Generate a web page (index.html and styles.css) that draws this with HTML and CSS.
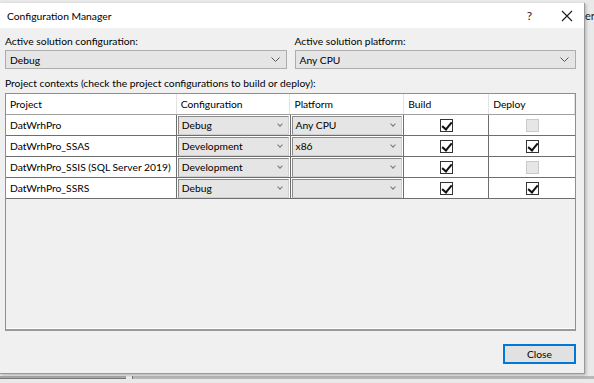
FILE: index.html
```html
<!DOCTYPE html>
<html lang="en">
<head>
    <meta charset="UTF-8">
    <title>Configuration Manager</title>
    <link rel="stylesheet" href="styles.css">
</head>
<body>
    <div class="behind-text">er</div>
    <div class="dialog">
        <div class="titlebar">
            <span class="title">Configuration Manager</span>
            <span class="help">?</span>
            <svg class="close-x" width="12" height="12" viewBox="0 0 12 12"><path d="M1 1 L11 11 M11 1 L1 11" stroke="#1a1a1a" stroke-width="1.1" fill="none"/></svg>
        </div>

        <div class="content">
            <div class="solution-row">
                <div class="field">
                    <label class="label">Active solution configuration:</label>
                    <div class="combo">
                        <span>Debug</span>
                        <svg width="9" height="5" viewBox="0 0 9 5"><path d="M0.5 0.5 L4.5 4.5 L8.5 0.5" stroke="#555" fill="none"/></svg>
                    </div>
                </div>
                <div class="field">
                    <label class="label">Active solution platform:</label>
                    <div class="combo">
                        <span>Any CPU</span>
                        <svg width="9" height="5" viewBox="0 0 9 5"><path d="M0.5 0.5 L4.5 4.5 L8.5 0.5" stroke="#555" fill="none"/></svg>
                    </div>
                </div>
            </div>

            <div class="label contexts-label">Project contexts (check the project configurations to build or deploy):</div>

            <div class="grid">
                <div class="grid-row header">
                    <div class="cell c-project">Project</div>
                    <div class="cell c-config">Configuration</div>
                    <div class="cell c-platform">Platform</div>
                    <div class="cell c-build">Build</div>
                    <div class="cell c-deploy">Deploy</div>
                </div>

                <div class="grid-row">
                    <div class="cell c-project">DatWrhPro</div>
                    <div class="cell c-config"><div class="cell-combo"><span>Debug</span><i class="chev"></i></div></div>
                    <div class="cell c-platform"><div class="cell-combo"><span>Any CPU</span><i class="chev"></i></div></div>
                    <div class="cell c-build"><span class="check on"></span></div>
                    <div class="cell c-deploy"><span class="check disabled"></span></div>
                </div>

                <div class="grid-row">
                    <div class="cell c-project">DatWrhPro_SSAS</div>
                    <div class="cell c-config"><div class="cell-combo"><span>Development</span><i class="chev"></i></div></div>
                    <div class="cell c-platform"><div class="cell-combo"><span>x86</span><i class="chev"></i></div></div>
                    <div class="cell c-build"><span class="check on"></span></div>
                    <div class="cell c-deploy"><span class="check on"></span></div>
                </div>

                <div class="grid-row">
                    <div class="cell c-project">DatWrhPro_SSIS (SQL Server 2019)</div>
                    <div class="cell c-config"><div class="cell-combo"><span>Development</span><i class="chev"></i></div></div>
                    <div class="cell c-platform"><div class="cell-combo"><span></span><i class="chev"></i></div></div>
                    <div class="cell c-build"><span class="check on"></span></div>
                    <div class="cell c-deploy"><span class="check disabled"></span></div>
                </div>

                <div class="grid-row">
                    <div class="cell c-project">DatWrhPro_SSRS</div>
                    <div class="cell c-config"><div class="cell-combo"><span>Debug</span><i class="chev"></i></div></div>
                    <div class="cell c-platform"><div class="cell-combo"><span></span><i class="chev"></i></div></div>
                    <div class="cell c-build"><span class="check on"></span></div>
                    <div class="cell c-deploy"><span class="check on"></span></div>
                </div>
            </div>

            <div class="buttons">
                <button class="btn default">Close</button>
            </div>
        </div>
    </div>
    <div class="taskstrip">
        <div class="strip-a"></div>
        <div class="strip-b"></div>
    </div>
</body>
</html>
```

FILE: styles.css
```css
* {
    margin: 0;
    padding: 0;
    box-sizing: border-box;
}

body {
    width: 594px;
    height: 383px;
    overflow: hidden;
    background: #e9e9e9;
    font-family: 'Lato', 'Noto Sans', sans-serif;
    font-size: 10.3px;
    color: #000;
    padding-top: 3px;
    position: relative;
}

.behind-text {
    position: absolute;
    left: 585px;
    top: 9px;
    font-size: 11px;
    color: #222;
}

.dialog {
    position: relative;
    width: 585px;
    height: 371px;
    background: #f0f0f0;
    border-right: 1px solid #9a9a9a;
    border-bottom: 1px solid #9a9a9a;
    box-shadow: 1px 1px 3px rgba(0, 0, 0, 0.25);
}

.titlebar {
    height: 25px;
    background: #fff;
    display: flex;
    align-items: center;
    padding-left: 7px;
}

.title {
    flex: 1;
}

.help {
    font-size: 12px;
    color: #222;
    margin-right: 29px;
}

.close-x {
    margin-right: 11px;
}

.content {
    padding: 4px 8px 0 5px;
}

.solution-row {
    display: flex;
    gap: 8px;
}

.field {
    flex: 1;
}

.label {
    display: block;
    height: 18px;
    line-height: 18px;
}

.combo {
    height: 19px;
    background: #e5e5e5;
    border: 1px solid #adadad;
    display: flex;
    align-items: center;
    justify-content: space-between;
    padding: 0 6px 0 4px;
}

.contexts-label {
    margin-top: 7px;
    height: 17px;
    line-height: 14px;
}

.grid {
    height: 238px;
    border: 1px solid #8f8f8f;
    border-bottom: 2px solid #9a9a9a;
    background: #f0f0f0;
    box-shadow: inset 0 -1px 0 #fff;
}

.grid-row {
    display: flex;
    height: 21px;
    background: #fff;
    border-bottom: 1px solid #6e6e6e;
}

.grid-row.header {
    border-bottom: 1px solid #a0a0a0;
}

.grid-row.header .cell {
    border-right: 1px solid #e3e3e3;
}

.cell {
    display: flex;
    align-items: center;
    padding-left: 4px;
    border-right: 1px solid #6e6e6e;
    white-space: nowrap;
    overflow: hidden;
}

.c-project { width: 171px; }
.c-config { width: 114px; padding: 1px; }
.c-platform { width: 114px; padding: 1px; }
.c-build { width: 85px; justify-content: center; padding-left: 0; }
.c-deploy { width: 86px; justify-content: center; padding-left: 0; border-right: none; }

.header .c-config,
.header .c-platform {
    padding-left: 4px;
}

.header .c-build,
.header .c-deploy {
    justify-content: flex-start;
    padding-left: 4px;
}

.cell-combo {
    flex: 1;
    height: 19px;
    background: #e5e5e5;
    border: 1px solid #8a8a8a;
    border-right-color: #d0d0d0;
    border-bottom-color: #d0d0d0;
    display: flex;
    align-items: center;
    justify-content: space-between;
    padding: 0 6px 0 3px;
}

.chev {
    width: 4px;
    height: 4px;
    border-right: 1px solid #777;
    border-bottom: 1px solid #777;
    transform: rotate(45deg);
    margin-bottom: 3px;
}

.check {
    width: 13px;
    height: 13px;
    border: 1px solid #333;
    background: #fff;
    position: relative;
}

.check.on::after {
    content: '';
    position: absolute;
    left: 3px;
    top: 0px;
    width: 4px;
    height: 8px;
    border-right: 2px solid #111;
    border-bottom: 2px solid #111;
    transform: rotate(40deg);
}

.check.disabled {
    border-color: #cacaca;
    background: #e6e6e6;
}

.buttons {
    display: flex;
    justify-content: flex-end;
    margin-top: 13px;
}

.btn {
    width: 73px;
    height: 20px;
    background: #e1e1e1;
    border: 2px solid #0078d7;
    font-family: inherit;
    font-size: 10.3px;
    color: #000;
}

.taskstrip {
    display: flex;
    gap: 6px;
    margin-top: 2px;
}

.strip-a {
    width: 126px;
    height: 3px;
    background: #a8a8a8;
    border-bottom: 1px solid #777;
}

.strip-b {
    flex: 1;
    height: 3px;
    background: #b8b8b8;
    border-left: 1px solid #777;
}
```
